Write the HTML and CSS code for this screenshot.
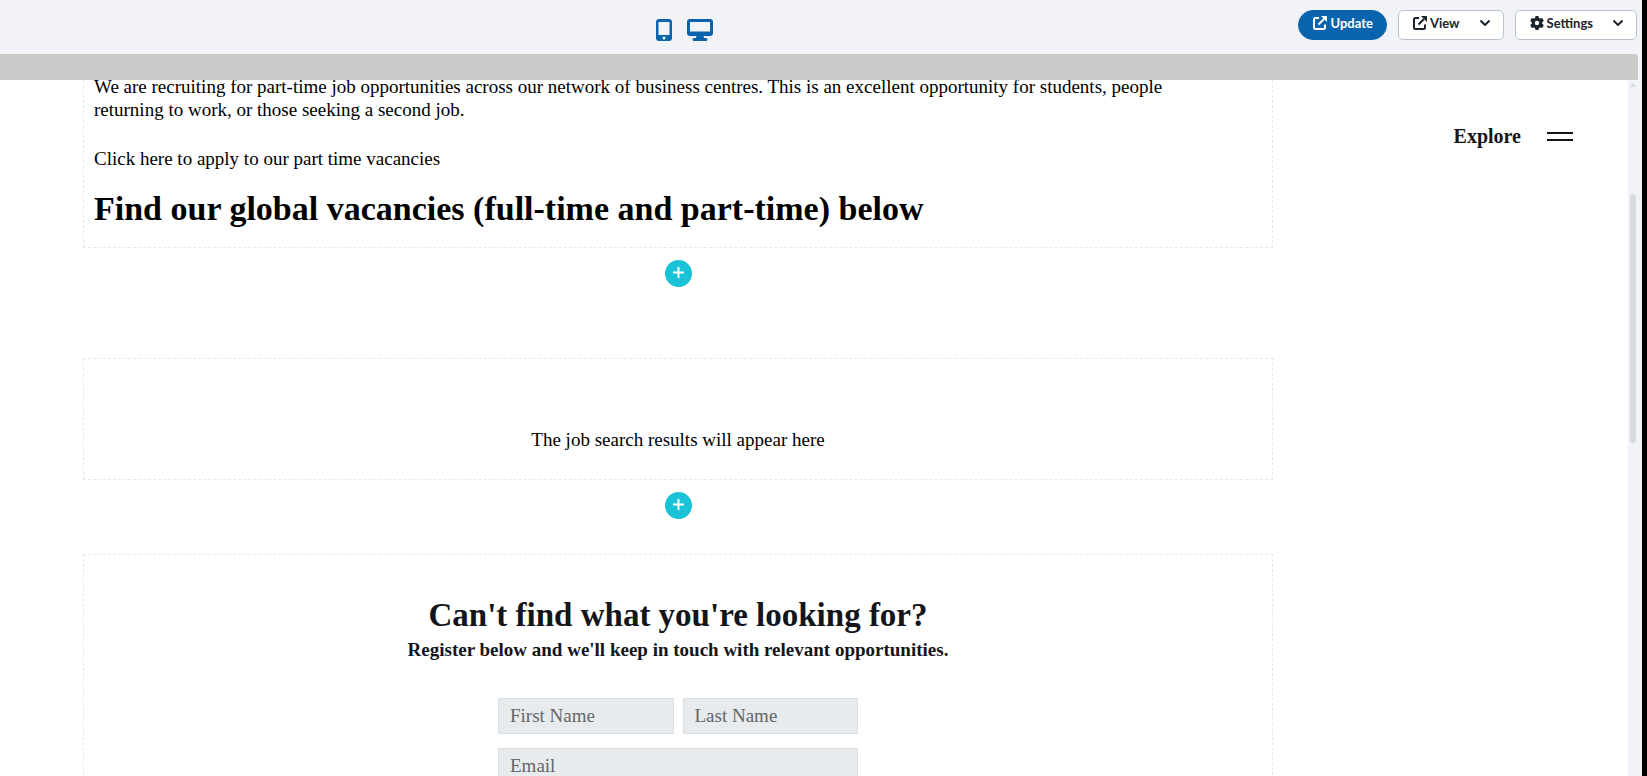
FILE: index.html
```
<!DOCTYPE html>
<html lang="en">
<head>
    <meta charset="utf-8">
    <title>Page Editor</title>
    <link rel="stylesheet" href="styles.css">
</head>
<body>
    <!-- Editor toolbar -->
    <header class="toolbar">
        <div class="devices">
            <button class="device" aria-label="Mobile preview">
                <svg width="16" height="22" viewBox="0 0 16 22"><path fill-rule="evenodd" d="M3 0h10a3 3 0 0 1 3 3v16a3 3 0 0 1-3 3H3a3 3 0 0 1-3-3V3a3 3 0 0 1 3-3zM2.500 3v13h11V3zM8 17.500a1.500 1.500 0 1 0 0 3 1.500 1.500 0 0 0 0-3z"/></svg>
            </button>
            <button class="device" aria-label="Desktop preview">
                <svg width="26" height="22" viewBox="0 0 26 22"><path fill-rule="evenodd" d="M3 0h20a3 3 0 0 1 3 3v11a3 3 0 0 1-3 3h-6.500l.7 2H19a1.500 1.500 0 0 1 0 3H7a1.500 1.500 0 0 1 0-3h1.800l.7-2H3a3 3 0 0 1-3-3V3a3 3 0 0 1 3-3zM3 3v9.500h20V3z"/></svg>
            </button>
        </div>
        <div class="actions">
            <button class="btn btn-primary">
                <svg width="14" height="14" viewBox="0 0 14 14"><path class="line" d="M6 2H2.500Q1 2 1 3.500v8Q1 13 2.500 13h8q1.500 0 1.500-1.500V8.500M5.500 8.500 11 3"/><path d="M8 0h5.300q.7 0 .7.700V6L8 0z"/></svg>
                Update
            </button>
            <button class="btn">
                <svg width="14" height="14" viewBox="0 0 14 14"><path class="line" d="M6 2H2.500Q1 2 1 3.500v8Q1 13 2.500 13h8q1.500 0 1.500-1.500V8.500M5.500 8.500 11 3"/><path d="M8 0h5.300q.7 0 .7.700V6L8 0z"/></svg>
                View
                <svg class="chevron" width="10" height="6" viewBox="0 0 10 6"><path class="line" d="M.5.500 5 5 9.500.500"/></svg>
            </button>
            <button class="btn">
                <svg width="14" height="14" viewBox="0 0 512 512"><path d="M495.900 166.600c3.200 8.700.5 18.400-6.400 24.600l-43.300 39.400c1.100 8.300 1.700 16.800 1.700 25.400s-.6 17.100-1.700 25.400l43.300 39.400c6.900 6.200 9.600 15.900 6.400 24.600-10.900 29.600-26.500 57.200-45.900 81.800-5.900 7.100-15.700 9.600-24.500 6.800l-55.700-17.700c-13.400 10.300-28.200 18.900-44 25.400l-12.500 57.100c-2 9.100-9 16.300-18.200 17.800-25.200 4.600-53 4.600-78.200 0-9.200-1.500-16.200-8.700-18.200-17.800l-12.500-57.100c-15.800-6.500-30.600-15.100-44-25.400l-55.700 17.700c-8.800 2.800-18.600.3-24.500-6.800-19.400-24.600-35-52.200-45.900-81.800-3.200-8.700-.5-18.400 6.400-24.600l43.300-39.400c-2.200-16.900-2.200-33.900 0-50.800l-43.300-39.400c-6.900-6.200-9.600-15.900-6.400-24.600 10.900-29.600 26.500-57.200 45.900-81.800 5.900-7.100 15.700-9.600 24.500-6.800l55.700 17.700c13.400-10.300 28.200-18.900 44-25.400l12.500-57.100c2-9.100 9-16.300 18.200-17.800 25.200-4.600 53-4.600 78.200 0 9.200 1.500 16.200 8.700 18.200 17.800l12.500 57.100c15.800 6.500 30.600 15.100 44 25.400l55.700-17.700c8.800-2.800 18.600-.3 24.500 6.800 19.400 24.600 35 52.200 45.900 81.800zM256 336a80 80 0 1 0 0-160 80 80 0 1 0 0 160z"/></svg>
                Settings
                <svg class="chevron" width="10" height="6" viewBox="0 0 10 6"><path class="line" d="M.5.500 5 5 9.500.500"/></svg>
            </button>
        </div>
    </header>

    <div class="frame-bar"></div>

    <!-- Page preview -->
    <div class="preview">
        <main class="page">
            <section class="block block-text">
                <p>We are recruiting for part-time job opportunities across our network of business centres. This is an excellent opportunity for students, people returning to work, or those seeking a second job.</p>
                <p>Click here to apply to our part time vacancies</p>
                <h2>Find our global vacancies (full-time and part-time) below</h2>
            </section>
            <div class="add-row add-row-tall">
                <button class="add" aria-label="Add block">
                    <svg width="11" height="11" viewBox="0 0 11 11"><path d="M4.500 0h2v4.500H11v2H6.500V11h-2V6.500H0v-2h4.500z"/></svg>
                </button>
            </div>

            <section class="block block-results">
                <p>The job search results will appear here</p>
            </section>
            <div class="add-row">
                <button class="add" aria-label="Add block">
                    <svg width="11" height="11" viewBox="0 0 11 11"><path d="M4.500 0h2v4.500H11v2H6.500V11h-2V6.500H0v-2h4.500z"/></svg>
                </button>
            </div>

            <section class="block block-register">
                <h2>Can't find what you're looking for?</h2>
                <h3>Register below and we'll keep in touch with relevant opportunities.</h3>
                <form class="form">
                    <input type="text" placeholder="First Name" aria-label="First Name">
                    <input type="text" placeholder="Last Name" aria-label="Last Name">
                    <input class="wide" type="email" placeholder="Email" aria-label="Email">
                </form>
            </section>
        </main>

        <aside class="side">
            <button class="explore">
                Explore
                <span class="burger"></span>
            </button>
        </aside>

        <div class="scrollbar">
            <div class="scroll-arrow"></div>
            <div class="scroll-thumb"></div>
        </div>
    </div>
</body>
</html>
```
FILE: styles.css
```
* {
    box-sizing: border-box;
}
body {
    display: flex;
    flex-direction: column;
    height: 100vh;
    margin: 0;
    overflow: hidden;
    background: #f1f3f8;
    border-right: 5px solid #000;
    font-family: "Liberation Serif", serif;
    font-size: 19px;
    line-height: 23px;
    color: #000;
}
h2, h3, p {
    margin: 0;
}
button {
    font: inherit;
    color: inherit;
    background: none;
    border: none;
    padding: 0;
    cursor: pointer;
}
svg {
    display: block;
    fill: currentColor;
}
.line {
    fill: none;
    stroke: currentColor;
    stroke-width: 2;
}

/* toolbar */
.toolbar {
    display: flex;
    flex: none;
    align-items: flex-start;
    height: 54px;
    padding: 0 5px 0 2px;
}
.devices {
    display: flex;
    gap: 15px;
    margin-left: 40%;
    padding-top: 19px;
    color: #0a64ad;
}
.actions {
    display: flex;
    gap: 11px;
    margin-left: auto;
    padding-top: 10px;
}
.btn {
    display: flex;
    align-items: center;
    gap: 3px;
    height: 30px;
    padding: 0 13px 4px 14px;
    font-family: Lato, sans-serif;
    font-size: 13px;
    font-weight: bold;
    line-height: 20px;
    color: #1b242c;
    background: #fff;
    border: 1px solid #b9c3d0;
    border-radius: 5px;
}
.btn-primary {
    color: #fff;
    background: #0a64ad;
    border-color: #0a64ad;
    border-radius: 15px;
}
.chevron {
    margin-left: 17px;
}

/* preview */
.frame-bar {
    flex: none;
    height: 26px;
    margin-right: 4px;
    background: #cbcbc9;
    border-top-right-radius: 4px;
}
.preview {
    display: flex;
    flex: 1;
    min-height: 0;
    overflow: hidden;
}
.page {
    flex: 1;
    padding-left: 83px;
    background: #fff;
}
.block {
    border: 1px dashed #e8e8e8;
    padding: 0 11px;
}
.block h2 {
    font-size: 33px;
    line-height: 40px;
}
/* first block is scrolled partly under the frame bar */
.block-text {
    margin-top: -5px;
    border-top: none;
    padding: 0 40px 18px 10px;
}
.block-text p {
    margin-bottom: 26px;
}
.block-text p + p {
    margin-bottom: 19px;
}
.block-text h2 {
    font-size: 34px;
}
.block-results {
    padding: 69px 11px 28px;
    text-align: center;
}
.block-register {
    padding-top: 40px;
    text-align: center;
    color: #14151a;
}
.block h3 {
    margin-top: 3px;
    font-size: 19px;
    line-height: 24px;
}
.add-row {
    display: flex;
    justify-content: center;
    padding: 12px 0 35px;
}
.add-row-tall {
    padding-bottom: 71px;
}
.add {
    display: flex;
    justify-content: center;
    align-items: center;
    width: 27px;
    height: 27px;
    padding-bottom: 2px;
    border-radius: 50%;
    color: #fff;
    background: #1ac2d8;
}

.form {
    display: grid;
    grid-template-columns: 1fr 1fr;
    gap: 14px 9px;
    max-width: 360px;
    margin: 36px auto 0;
}
.form input {
    min-width: 0;
    height: 36px;
    padding: 0 11px;
    font: inherit;
    background: #e7ebee;
    border: 1px solid #d9dfe2;
}
.form input::placeholder {
    color: #666;
}
.form .wide {
    grid-column: 1 / 3;
}

/* site menu */
.side {
    flex: none;
    width: 355px;
    padding: 45px 55px;
    background: #fff;
}
.explore {
    display: flex;
    align-items: center;
    gap: 26px;
    margin-left: auto;
    font-size: 20px;
    font-weight: bold;
    color: #14151a;
}
.burger {
    width: 26px;
    height: 9px;
    border-top: 2px solid #14151a;
    border-bottom: 2px solid #14151a;
}

/* scrollbar of the preview */
.scrollbar {
    flex: none;
    width: 14px;
    padding: 3px 6px 0 2px;
}
.scroll-arrow {
    height: 4px;
    background: #d6dbde;
    clip-path: polygon(50% 0, 100% 100%, 0 100%);
}
.scroll-thumb {
    height: 36%;
    margin-top: 107px;
    border-radius: 3px;
    background: #d6dbde;
}
```
